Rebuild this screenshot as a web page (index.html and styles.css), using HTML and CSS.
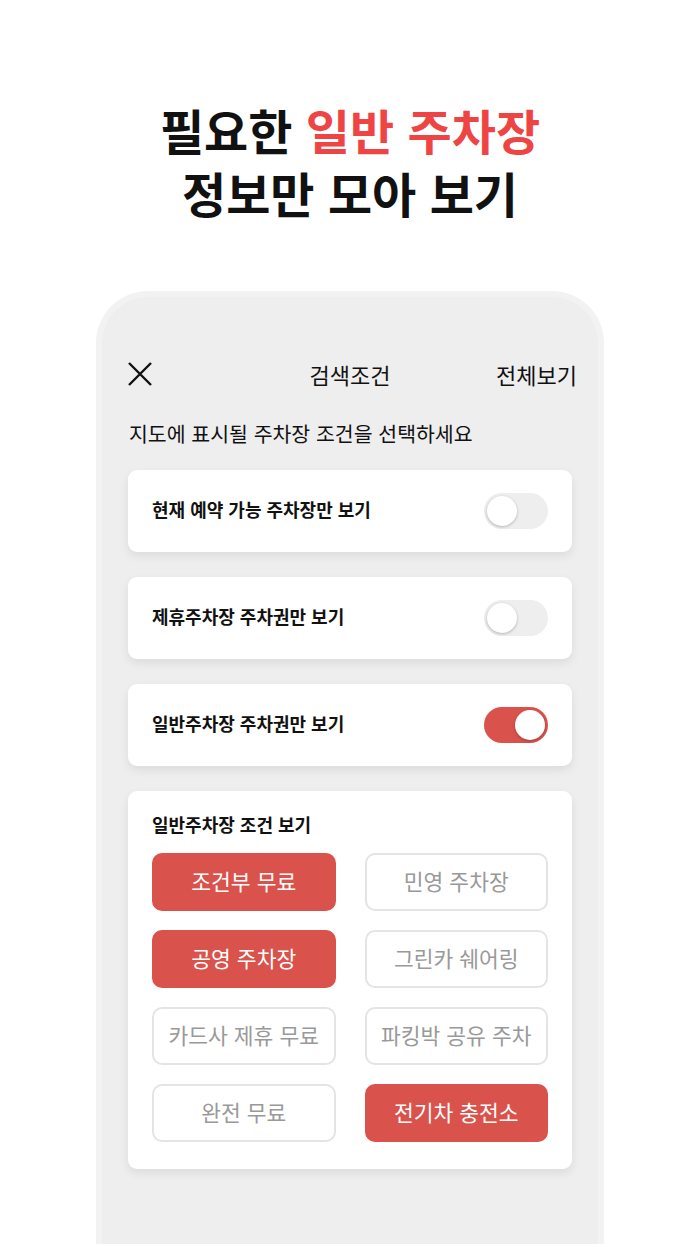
FILE: index.html
```html
<!DOCTYPE html>
<html lang="ko">
<head>
    <meta charset="UTF-8">
    <meta name="viewport" content="width=device-width, initial-scale=1.0">
    <title>검색조건</title>
    <link rel="stylesheet" href="styles.css">
</head>
<body>
    <h1 class="headline">필요한 <span class="accent">일반 주차장</span><br>정보만 모아 보기</h1>
    <div class="phone">
        <div class="topbar">
            <svg class="close" width="26" height="26" viewBox="0 0 26 26">
                <path d="M2 2L24 24M24 2L2 24" stroke="#111" stroke-width="2.4" fill="none"/>
            </svg>
            <div class="title">검색조건</div>
            <div class="all">전체보기</div>
        </div>
        <p class="hint">지도에 표시될 주차장 조건을 선택하세요</p>

        <div class="card row">
            <span class="label">현재 예약 가능 주차장만 보기</span>
            <span class="switch"><span class="knob"></span></span>
        </div>
        <div class="card row">
            <span class="label">제휴주차장 주차권만 보기</span>
            <span class="switch"><span class="knob"></span></span>
        </div>
        <div class="card row">
            <span class="label">일반주차장 주차권만 보기</span>
            <span class="switch on"><span class="knob"></span></span>
        </div>

        <div class="card options">
            <div class="label">일반주차장 조건 보기</div>
            <div class="grid">
                <button class="chip active">조건부 무료</button>
                <button class="chip">민영 주차장</button>
                <button class="chip active">공영 주차장</button>
                <button class="chip">그린카 쉐어링</button>
                <button class="chip">카드사 제휴 무료</button>
                <button class="chip">파킹박 공유 주차</button>
                <button class="chip">완전 무료</button>
                <button class="chip active">전기차 충전소</button>
            </div>
        </div>
    </div>
</body>
</html>
```

FILE: styles.css
```css
html, body {
    margin: 0;
    padding: 0;
}
body {
    background: #fff;
    font-family: "Noto Sans CJK KR", "Noto Sans", sans-serif;
    color: #111;
    height: 1244px;
    overflow: hidden;
}
.headline {
    margin: 0;
    padding-top: 98px;
    text-align: center;
    font-size: 48px;
    line-height: 63px;
    font-weight: 700;
    color: #111;
}
.accent {
    color: #ef4444;
}
.phone {
    width: 508px;
    margin: 67px auto 0;
    background: #eeeeee;
    border: 6px solid #f2f2f2;
    border-bottom: none;
    border-radius: 52px 52px 0 0;
    padding: 57px 26px 80px;
    box-sizing: border-box;
    min-height: 960px;
}
.topbar {
    display: flex;
    align-items: center;
    justify-content: space-between;
    height: 40px;
    position: relative;
}
.close {
    margin-left: -1px;
}
.title {
    position: absolute;
    left: 0;
    right: 0;
    text-align: center;
    font-size: 22px;
    color: #111;
    pointer-events: none;
}
.all {
    font-size: 22px;
    color: #111;
    margin-right: -5px;
}
.hint {
    margin: 25px 0 23px 1px;
    font-size: 20.5px;
    line-height: 28px;
    color: #111;
}
.card {
    background: #fff;
    border-radius: 9px;
    box-shadow: 0 4px 10px rgba(0, 0, 0, 0.08);
    margin-bottom: 25px;
}
.row {
    height: 82px;
    box-sizing: border-box;
    padding: 0 24px;
    display: flex;
    align-items: center;
    justify-content: space-between;
}
.row .label {
    padding-bottom: 4px;
}
.label {
    font-size: 18px;
    font-weight: 700;
    color: #111;
}
.switch {
    width: 64px;
    height: 36px;
    border-radius: 18px;
    background: #eeeeee;
    display: flex;
    align-items: center;
    padding: 0 3px;
    box-sizing: border-box;
}
.knob {
    width: 30px;
    height: 30px;
    border-radius: 50%;
    background: #fff;
    box-shadow: 0 1px 3px rgba(0, 0, 0, 0.25);
}
.switch.on {
    background: #da524c;
    justify-content: flex-end;
}
.options {
    padding: 21px 24px 27px;
}
.options .label {
    line-height: 24px;
}
.grid {
    margin-top: 17px;
    display: grid;
    grid-template-columns: 1fr 1fr;
    column-gap: 29px;
    row-gap: 19px;
}
.chip {
    height: 58px;
    border-radius: 10px;
    border: 2px solid #e4e4e4;
    background: #fff;
    color: #999;
    font-family: inherit;
    font-size: 21.5px;
    padding: 0 0 3px;
    white-space: nowrap;
    overflow: hidden;
}
.chip.active {
    background: #da524c;
    border-color: #da524c;
    color: #fff;
}
```
